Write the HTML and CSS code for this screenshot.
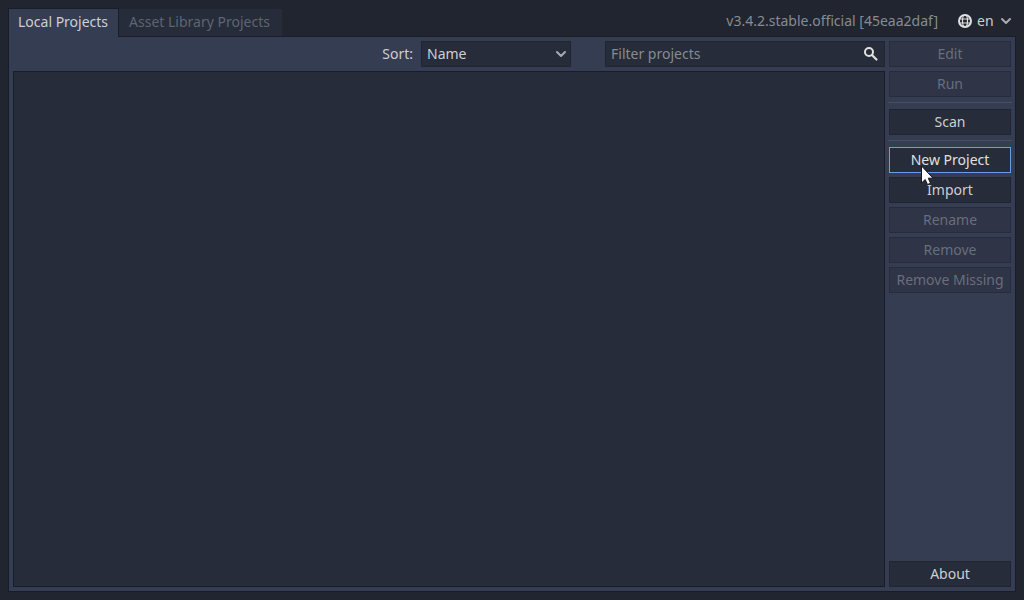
FILE: index.html
```html
<!DOCTYPE html>
<html lang="en">
<head>
    <meta charset="UTF-8">
    <meta name="viewport" content="width=device-width, initial-scale=1.0">
    <title>Project Manager</title>
    <link rel="stylesheet" href="styles.css">
</head>
<body>
    <div class="manager">
        <header class="top-bar">
            <div class="tabs" role="tablist">
                <button class="tab active" role="tab" aria-selected="true">Local Projects</button>
                <button class="tab" role="tab" aria-selected="false">Asset Library Projects</button>
            </div>
            <span class="version">v3.4.2.stable.official [45eaa2daf]</span>
            <div class="language">
                <svg class="icon" viewBox="0 0 16 16" fill="none" stroke="#e0e0e0">
                    <circle cx="8" cy="8" r="6" stroke-width="2"/>
                    <ellipse cx="8" cy="8" rx="2.500" ry="6" stroke-width="1.200"/>
                    <path d="M2 6h12M2 10h12" stroke-width="1.200"/>
                </svg>
                <select class="language-select" aria-label="Language">
                    <option>en</option>
                </select>
                <svg class="chevron" viewBox="0 0 12 12"><path d="M2 4l4 4 4-4"/></svg>
            </div>
        </header>

        <main class="panel">
            <!-- Project list -->
            <div class="projects">
                <div class="toolbar">
                    <label class="sort-label" for="sort">Sort:</label>
                    <div class="field sort">
                        <select id="sort">
                            <option>Name</option>
                        </select>
                        <svg class="chevron" viewBox="0 0 12 12"><path d="M2 4l4 4 4-4"/></svg>
                    </div>
                    <div class="field filter">
                        <input type="text" placeholder="Filter projects" aria-label="Filter projects">
                        <svg class="icon" viewBox="0 0 16 16" fill="none" stroke="#e0e0e0">
                            <circle cx="6" cy="6" r="4" stroke-width="2"/>
                            <path d="M9 9l4.500 4.500" stroke-width="2.200" stroke-linecap="round"/>
                        </svg>
                    </div>
                </div>
                <div class="list"></div>
            </div>

            <!-- Project actions -->
            <div class="actions">
                <button class="btn" disabled>Edit</button>
                <button class="btn" disabled>Run</button>
                <hr class="separator">
                <button class="btn">Scan</button>
                <hr class="separator">
                <div class="target">
                    <button class="btn focused">New Project</button>
                    <svg class="cursor" viewBox="0 0 12 20">
                        <path d="M.5 1v17l3.700-3.500L6.500 19.500l3-1.200-2.200-5.100H12z" fill="#fff" stroke="#15171d"/>
                    </svg>
                </div>
                <button class="btn">Import</button>
                <button class="btn" disabled>Rename</button>
                <button class="btn" disabled>Remove</button>
                <button class="btn" disabled>Remove Missing</button>
                <button class="btn about">About</button>
            </div>
        </main>
    </div>
</body>
</html>
```

FILE: styles.css
```css
* {
    margin: 0;
    padding: 0;
    box-sizing: border-box;
}

body {
    background: #212530;
    color: #cdcfd3;
    font-family: "Noto Sans", sans-serif;
    font-size: 14px;
    line-height: 20px;
}

button,
select,
input {
    font: inherit;
    color: inherit;
    border: none;
    outline: none;
    background: transparent;
    appearance: none;
}

.manager {
    display: flex;
    flex-direction: column;
    min-height: 100vh;
    padding: 8px;
}

/* Tabs and version */
.top-bar {
    display: flex;
    align-items: flex-start;
    height: 28px;
}

.tabs {
    display: flex;
    flex: 1;
}

.tab {
    height: 28px;
    padding: 0 12px 2px 10px;
    border-top: 1px solid #212530;
    background: #262c39;
    background-clip: padding-box;
    color: #5f6570;
}

.tab.active {
    position: relative;
    height: 29px;
    padding: 0 10px 3px 9px;
    border: 1px solid #191d27;
    border-bottom: none;
    background: #353d52;
    color: #cdcfd3;
}

.version {
    padding-top: 3px;
    color: #888b91;
}

.language {
    display: flex;
    align-items: center;
    gap: 4px;
    height: 26px;
    margin-left: 19px;
    padding-right: 4px;
}

.language-select {
    width: 19px;
}

.icon {
    width: 16px;
    height: 16px;
}

.chevron {
    width: 12px;
    height: 12px;
    fill: none;
    stroke: #a9abb0;
    stroke-width: 2;
    stroke-linecap: round;
    stroke-linejoin: round;
    pointer-events: none;
}

/* Main panel */
.panel {
    display: flex;
    flex: 1;
    gap: 4px;
    padding: 4px;
    border: 1px solid #191d27;
    background: #353d52;
}

.projects {
    display: flex;
    flex: 1;
    flex-direction: column;
    gap: 4px;
}

.toolbar {
    display: flex;
    justify-content: flex-end;
    align-items: center;
}

.sort-label {
    margin-right: 8px;
}

.field {
    display: flex;
    align-items: center;
    height: 26px;
    border: 1px solid #202531;
    background: #262c39;
}

.field select,
.field input {
    flex: 1;
    min-width: 0;
    padding-left: 5px;
}

.field input::placeholder {
    color: #888b91;
    opacity: 1;
}

.sort {
    width: 150px;
    margin-right: 34px;
    padding-right: 3px;
}

.filter {
    width: 280px;
    padding-right: 5px;
}

.list {
    flex: 1;
    border: 1px solid #191d27;
    background: #262c39;
}

/* Buttons on the right */
.actions {
    display: flex;
    flex-direction: column;
    gap: 4px;
    width: 122px;
}

.btn {
    width: 100%;
    height: 26px;
    border: 1px solid #202531;
    background: #262c39;
    text-align: center;
}

.btn:disabled {
    border-color: #272c3c;
    background: #2f3447;
    color: #696e7b;
}

.btn.focused {
    border-color: #699ce8;
    color: #e0e0e0;
}

.separator {
    height: 4px;
    margin: 0 -1px;
    border: none;
    background: linear-gradient(#484f61, #484f61) 0 1px / 100% 1px no-repeat;
}

.target {
    position: relative;
    height: 26px;
}

.cursor {
    position: absolute;
    top: 18px;
    left: 32px;
    width: 12px;
    height: 20px;
}

.about {
    margin-top: auto;
}
```
